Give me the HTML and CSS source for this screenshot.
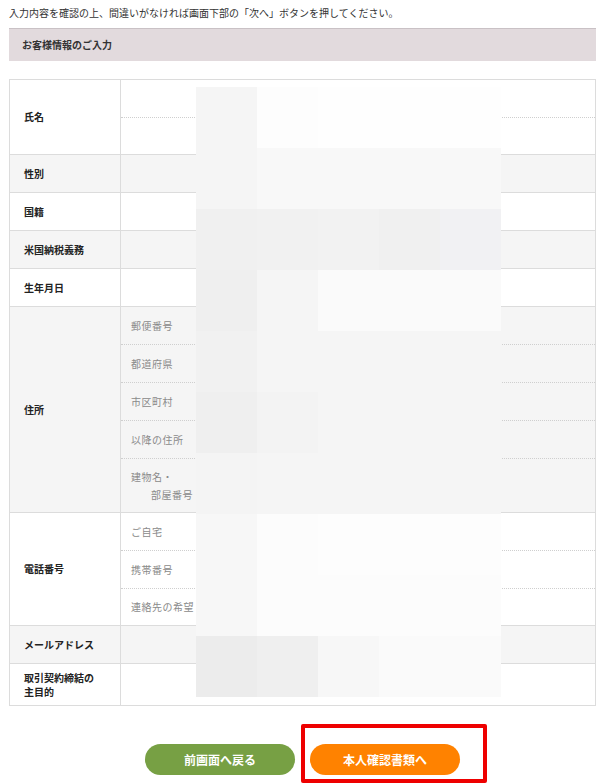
FILE: index.html
```html
<!DOCTYPE html>
<html lang="ja">
<head>
<meta charset="utf-8">
<title>お客様情報のご入力</title>
<link rel="stylesheet" href="styles.css">
</head>
<body>
<div class="page">
  <p class="lead">入力内容を確認の上、間違いがなければ画面下部の「次へ」ボタンを押してください。</p>
  <h2 class="section-head">お客様情報のご入力</h2>
  <table class="info">
    <tr class="row">
      <th class="label">氏名</th>
      <td class="value">
        <div class="sub"><span class="sub-label"></span></div>
        <div class="sub"><span class="sub-label"></span></div>
      </td>
    </tr>
    <tr class="row alt">
      <th class="label">性別</th>
      <td class="value"><div class="single"></div></td>
    </tr>
    <tr class="row">
      <th class="label">国籍</th>
      <td class="value"><div class="single"></div></td>
    </tr>
    <tr class="row alt">
      <th class="label">米国納税義務</th>
      <td class="value"><div class="single"></div></td>
    </tr>
    <tr class="row">
      <th class="label">生年月日</th>
      <td class="value"><div class="single"></div></td>
    </tr>
    <tr class="row alt">
      <th class="label">住所</th>
      <td class="value">
        <div class="sub"><span class="sub-label">郵便番号</span></div>
        <div class="sub"><span class="sub-label">都道府県</span></div>
        <div class="sub"><span class="sub-label">市区町村</span></div>
        <div class="sub"><span class="sub-label">以降の住所</span></div>
        <div class="sub tall"><span class="sub-label">建物名・<span class="indent">部屋番号</span></span></div>
      </td>
    </tr>
    <tr class="row">
      <th class="label">電話番号</th>
      <td class="value">
        <div class="sub"><span class="sub-label">ご自宅</span></div>
        <div class="sub"><span class="sub-label">携帯番号</span></div>
        <div class="sub"><span class="sub-label">連絡先の希望</span></div>
      </td>
    </tr>
    <tr class="row alt">
      <th class="label">メールアドレス</th>
      <td class="value"><div class="single"></div></td>
    </tr>
    <tr class="row">
      <th class="label">取引契約締結の<br>主目的</th>
      <td class="value"><div class="single double"></div></td>
    </tr>
  </table>
  <div class="actions">
    <button class="btn btn-back" type="button">前画面へ戻る</button>
    <button class="btn btn-next" type="button">本人確認書類へ</button>
  </div>
</div>

<div class="mosaic" aria-hidden="true">
  <i class="m-f5"></i><i class="m-fd"></i><i class="m-fe"></i><i class="m-fe"></i><i class="m-fe"></i>
  <i class="m-f5"></i><i class="m-f8"></i><i class="m-f8"></i><i class="m-f8"></i><i class="m-f8"></i>
  <i class="m-f0"></i><i class="m-f1"></i><i class="m-f2"></i><i class="m-f0"></i><i class="m-f1b"></i>
  <i class="m-ef"></i><i class="m-f5"></i><i class="m-fa"></i><i class="m-fa"></i><i class="m-fa"></i>
  <i class="m-f1"></i><i class="m-f5"></i><i class="m-f5"></i><i class="m-f5"></i><i class="m-f5"></i>
  <i class="m-ef"></i><i class="m-f3"></i><i class="m-f5"></i><i class="m-f5"></i><i class="m-f5"></i>
  <i class="m-f4"></i><i class="m-f5"></i><i class="m-f5"></i><i class="m-f5"></i><i class="m-f5"></i>
  <i class="m-f7"></i><i class="m-fc"></i><i class="m-fd"></i><i class="m-fd"></i><i class="m-fd"></i>
  <i class="m-f7"></i><i class="m-fc"></i><i class="m-fc"></i><i class="m-fc"></i><i class="m-fc"></i>
  <i class="m-ec"></i><i class="m-ef"></i><i class="m-f7"></i><i class="m-fa"></i><i class="m-fa"></i>
</div>
<div class="highlight" aria-hidden="true"></div>
</body>
</html>
```
FILE: styles.css
```css
* { box-sizing: border-box; }
html, body {
  margin: 0;
  padding: 0;
  background: #fff;
}
body {
  font-family: "Noto Sans CJK JP", "Noto Sans", sans-serif;
  color: #333;
  font-size: 10px;
  width: 609px;
  height: 784px;
  overflow: hidden;
  position: relative;
}
.page {
  padding: 0 13px 0 9px;
}
.lead {
  margin: 0;
  padding-top: 5px;
  line-height: 16px;
  font-size: 10px;
  color: #333;
  white-space: nowrap;
}
.section-head {
  margin: 7px 0 0;
  height: 33px;
  border-top: 1px solid #c9c1c5;
  background: #e2dadd;
  padding-left: 13px;
  font-size: 10px;
  font-weight: 700;
  line-height: 32px;
  color: #333;
}
.info {
  margin-top: 18px;
  width: 100%;
  border-collapse: collapse;
  border: 1px solid #dcdcdc;
}
.info .row > th,
.info .row > td {
  border: 1px solid #dcdcdc;
  padding: 0;
  vertical-align: middle;
}
.info .row.alt { background: #f5f5f5; }
.label {
  width: 111px;
  text-align: left;
  padding-left: 14px !important;
  font-weight: 700;
  font-size: 10px;
  line-height: 14px;
  color: #222;
}
.single { height: 37px; }
.single.double { height: 41px; }
.sub {
  height: 38px;
  display: flex;
  align-items: center;
  border-bottom: 1px dotted #cfcfcf;
}
.sub:last-child {
  height: 36px;
  border-bottom: none;
}
.sub.tall { height: 53px; }
.sub-label {
  width: 76px;
  padding-left: 10px;
  color: #8a8a8a;
  font-size: 10px;
  line-height: 18px;
  letter-spacing: 0.5px;
}
.indent {
  display: block;
  padding-left: 20px;
}
.actions {
  display: flex;
  justify-content: center;
  gap: 15px;
  margin-top: 38px;
}
.btn {
  width: 150px;
  height: 31px;
  border: none;
  border-radius: 16px;
  color: #fff;
  font-family: "Noto Sans CJK JP", sans-serif;
  font-size: 12px;
  font-weight: 700;
  cursor: pointer;
}
.btn-back { background: #77a044; }
.btn-next { background: #ff8200; }

.mosaic {
  position: absolute;
  left: 196px;
  top: 87px;
  display: grid;
  grid-template-columns: repeat(5, 61px);
  grid-template-rows: repeat(10, 61px);
}
.mosaic i { display: block; }
.m-ec { background: #ececec; }
.m-ef { background: #efefef; }
.m-f0 { background: #f0f0f0; }
.m-f1 { background: #f1f1f1; }
.m-f1b { background: #f1f1f3; }
.m-f2 { background: #f2f2f2; }
.m-f3 { background: #f3f3f3; }
.m-f4 { background: #f4f4f4; }
.m-f5 { background: #f5f5f5; }
.m-f7 { background: #f7f7f7; }
.m-f8 { background: #f8f8f8; }
.m-fa { background: #fafafa; }
.m-fc { background: #fcfcfc; }
.m-fd { background: #fdfdfd; }
.m-fe { background: #fefefe; }

.highlight {
  position: absolute;
  left: 301px;
  top: 724px;
  width: 186px;
  height: 59px;
  border: 4px solid #ee0000;
  border-radius: 2px;
}
```
